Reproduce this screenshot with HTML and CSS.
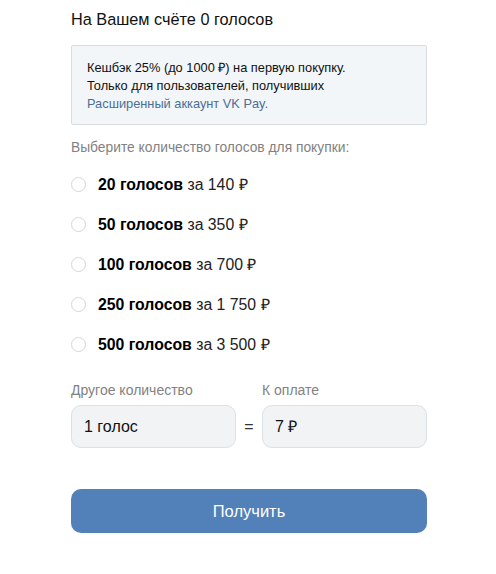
FILE: index.html
```html
<!DOCTYPE html>
<html lang="ru">
<head>
<meta charset="utf-8">
<link rel="stylesheet" href="styles.css">
</head>
<body>
<div class="page">
  <div class="title">На Вашем счёте 0 голосов</div>
  <div class="promo">
    <div>Кешбэк 25% (до 1000 ₽) на первую покупку.</div>
    <div>Только для пользователей, получивших</div>
    <div class="link">Расширенный аккаунт VK Pay.</div>
  </div>
  <div class="hint">Выберите количество голосов для покупки:</div>
  <div class="options">
    <label class="opt"><span class="radio"></span><span><b>20 голосов</b> за 140 ₽</span></label>
    <label class="opt"><span class="radio"></span><span><b>50 голосов</b> за 350 ₽</span></label>
    <label class="opt"><span class="radio"></span><span><b>100 голосов</b> за 700 ₽</span></label>
    <label class="opt"><span class="radio"></span><span><b>250 голосов</b> за 1 750 ₽</span></label>
    <label class="opt"><span class="radio"></span><span><b>500 голосов</b> за 3 500 ₽</span></label>
  </div>
  <div class="calc">
    <div class="field">
      <div class="flabel">Другое количество</div>
      <div class="input">1 голос</div>
    </div>
    <div class="eq">=</div>
    <div class="field">
      <div class="flabel">К оплате</div>
      <div class="input">7 ₽</div>
    </div>
  </div>
  <div class="btn">Получить</div>
</div>
</body>
</html>
```

FILE: styles.css
```css
html, body {
  margin: 0;
  padding: 0;
  background: #fff;
}
body {
  font-family: "Liberation Sans", Arial, sans-serif;
  color: #000;
}
.page {
  width: 356px;
  padding: 9px 0 0 71px;
}
.title {
  font-size: 16.3px;
  line-height: 20px;
  color: #111;
}
.promo {
  margin-top: 16px;
  border: 1px solid #d9dde3;
  background: #f3f6f9;
  border-radius: 2px;
  padding: 13px 15px 11px;
  font-size: 12.8px;
  line-height: 18px;
  color: #111;
}
.promo .link {
  color: #4b6f94;
}
.hint {
  margin-top: 14px;
  font-size: 13.8px;
  line-height: 18px;
  color: #828282;
}
.options {
  display: flex;
  flex-direction: column;
  margin-top: 7px;
}
.opt {
  display: flex;
  align-items: center;
  height: 40px;
  font-size: 15.8px;
  color: #222;
}
.opt b {
  color: #000;
}
.radio {
  width: 13px;
  height: 13px;
  border: 1px solid #d3d6da;
  border-radius: 50%;
  margin-right: 12px;
  background: #fff;
}
.calc {
  display: flex;
  align-items: flex-end;
  margin-top: 17px;
}
.field {
  flex: 1;
}
.flabel {
  font-size: 14px;
  line-height: 18px;
  color: #828282;
  margin-bottom: 6px;
}
.input {
  height: 41px;
  border: 1px solid #dce1e6;
  border-radius: 10px;
  background: #f1f3f5;
  font-size: 16px;
  line-height: 41px;
  padding-left: 12px;
  color: #111;
}
.eq {
  width: 26px;
  text-align: center;
  font-size: 16px;
  line-height: 43px;
  color: #333;
}
.btn {
  margin-top: 41px;
  height: 44px;
  border-radius: 10px;
  background: #5181b8;
  color: #fff;
  font-size: 16.5px;
  line-height: 44px;
  text-align: center;
}
```
